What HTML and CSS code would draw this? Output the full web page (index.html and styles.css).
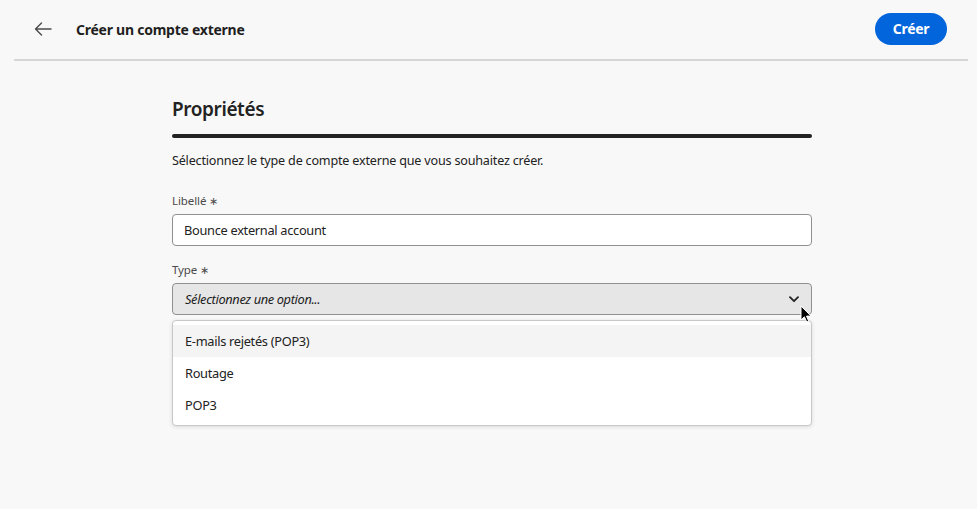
FILE: index.html
```html
<!DOCTYPE html>
<html lang="fr">
<head>
<meta charset="utf-8">
<link rel="stylesheet" href="styles.css">
</head>
<body>
<header class="topbar">
  <div class="topbar-left">
    <button class="back" aria-label="Retour">
      <svg width="18" height="14" viewBox="0 0 18 14"><path d="M17 7H1.5M7.5 1L1.5 7l6 6" fill="none" stroke="#4b4b4b" stroke-width="1.4" stroke-linecap="round" stroke-linejoin="round"/></svg>
    </button>
    <h1 class="title">Créer un compte externe</h1>
  </div>
  <button class="cta">Créer</button>
</header>
<main class="content">
  <section class="form">
    <h2 class="section-title">Propriétés</h2>
    <div class="rule"></div>
    <p class="desc">Sélectionnez le type de compte externe que vous souhaitez créer.</p>
    <div class="field">
      <label class="label">Libellé <span class="req">∗</span></label>
      <div class="input">Bounce external account</div>
    </div>
    <div class="field type-field">
      <label class="label">Type <span class="req">∗</span></label>
      <div class="select">
        <span class="placeholder">Sélectionnez une option...</span>
        <svg class="chev" width="10" height="7" viewBox="0 0 10 7"><path d="M1 1.2l4 4 4-4" fill="none" stroke="#222" stroke-width="1.8" stroke-linecap="round" stroke-linejoin="round"/></svg>
      </div>
      <ul class="menu">
        <li class="item hover">E-mails rejetés (POP3)</li>
        <li class="item">Routage</li>
        <li class="item">POP3</li>
      </ul>
      <svg class="cursor" width="12" height="18" viewBox="0 0 12 18"><path d="M1 1v14l3.4-3.2 2.3 5.2 2-0.9-2.2-5H11z" fill="#000" stroke="#fff" stroke-width="1"/></svg>
    </div>
  </section>
</main>
</body>
</html>
```
FILE: styles.css
```css
* { box-sizing: border-box; }
html, body { margin: 0; padding: 0; }
body {
  background: #f8f8f8;
  font-family: "Noto Sans", "Open Sans", sans-serif;
  color: #222;
  width: 977px;
  height: 509px;
  overflow: hidden;
}
.topbar {
  margin: 0 9px 0 14px;
  height: 61px;
  border-bottom: 2px solid #d6d6d6;
  display: flex;
  align-items: center;
  justify-content: space-between;
  padding: 0 21px 0 18px;
}
.topbar-left { display: flex; align-items: center; gap: 22px; }
.back {
  background: none; border: 0; padding: 0; width: 22px; height: 20px;
  display: flex; align-items: center; justify-content: center; margin-top: -1px;
}
.title {
  margin: 0;
  font-size: 14px;
  font-weight: 700;
  color: #1f1f1f;
  letter-spacing: -0.25px;
}
.cta {
  background: #0265dc;
  color: #fff;
  border: 0;
  border-radius: 16px;
  height: 32px;
  width: 72px;
  font-family: inherit;
  font-size: 14px;
  font-weight: 700;
  letter-spacing: -0.3px;
  margin-top: -2px;
}
.content { display: flex; justify-content: center; }
.form { width: 640px; margin-left: 7px; padding-top: 34px; }
.section-title {
  margin: 0;
  font-size: 19px;
  font-weight: 600;
  line-height: 28px;
  color: #222;
  letter-spacing: -0.4px;
}
.rule {
  height: 4px;
  background: #222;
  border-radius: 2px;
  margin-top: 11px;
}
.desc {
  margin: 13px 0 0;
  font-size: 12.6px;
  line-height: 20px;
  color: #222;
  letter-spacing: -0.2px;
}
.field { margin-top: 21px; position: relative; }
.type-field { margin-top: 15px; }
.label {
  display: block;
  font-size: 11.5px;
  color: #4b4b4b;
  line-height: 18px;
  letter-spacing: -0.1px;
}
.req { font-size: 11px; }
.input {
  margin-top: 4px;
  height: 32px;
  background: #fff;
  border: 1px solid #909090;
  border-radius: 4px;
  padding: 0 11px;
  display: flex;
  align-items: center;
  font-size: 12.8px;
  letter-spacing: -0.3px;
  color: #222;
}
.select {
  margin-top: 4px;
  height: 32px;
  background: #e6e6e6;
  border: 1px solid #909090;
  border-radius: 4px;
  padding: 0 12px 0 12px;
  display: flex;
  align-items: center;
  justify-content: space-between;
}
.placeholder {
  font-style: italic;
  font-size: 12.8px;
  letter-spacing: -0.35px;
  color: #222;
}
.chev { margin-top: 1px; }
.menu {
  list-style: none;
  margin: 5px 0 0;
  padding: 4px 0;
  background: #fff;
  border: 1px solid #c8c8c8;
  border-radius: 4px;
  box-shadow: 0 1px 4px rgba(0,0,0,0.12);
}
.item {
  height: 32px;
  display: flex;
  align-items: center;
  padding: 0 12px;
  font-size: 12.8px;
  letter-spacing: -0.3px;
  color: #222;
}
.item.hover { background: #f4f4f4; }
.cursor { position: absolute; left: 628px; top: 44px; }
```
